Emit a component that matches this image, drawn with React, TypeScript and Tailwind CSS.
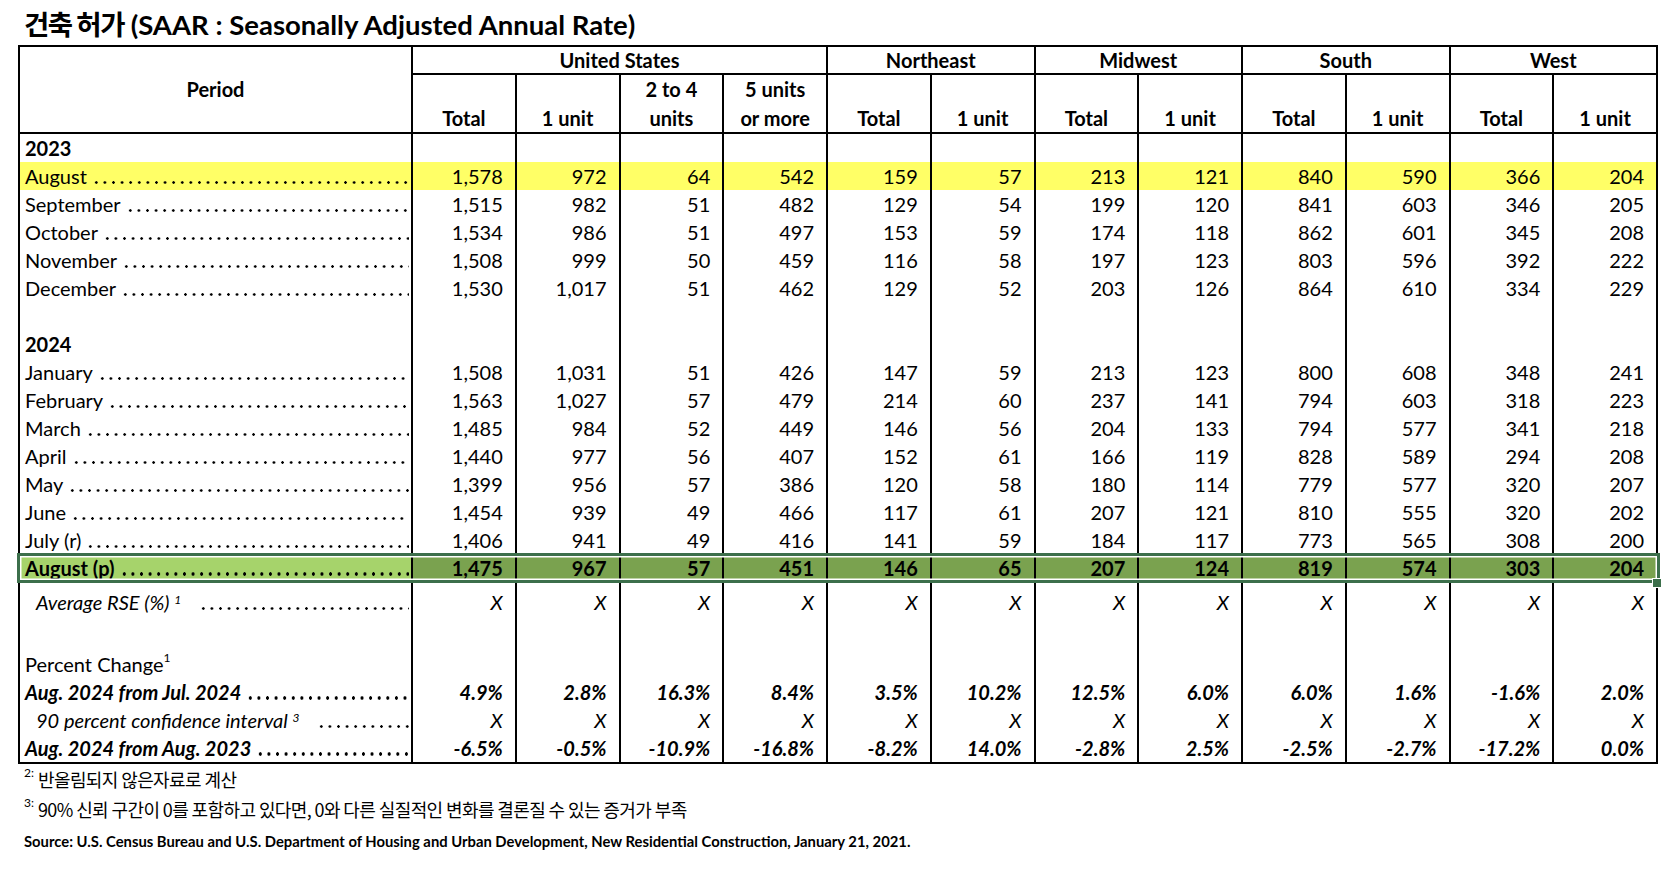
import React from "react";

type Row = {
  label: string;
  values?: string[];
  kind?: "year" | "blank" | "yellow" | "green";
};

const ROWS: Row[] = [
  { label: "2023", kind: "year" },
  { label: "August", kind: "yellow", values: ["1,578", "972", "64", "542", "159", "57", "213", "121", "840", "590", "366", "204"] },
  { label: "September", values: ["1,515", "982", "51", "482", "129", "54", "199", "120", "841", "603", "346", "205"] },
  { label: "October", values: ["1,534", "986", "51", "497", "153", "59", "174", "118", "862", "601", "345", "208"] },
  { label: "November", values: ["1,508", "999", "50", "459", "116", "58", "197", "123", "803", "596", "392", "222"] },
  { label: "December", values: ["1,530", "1,017", "51", "462", "129", "52", "203", "126", "864", "610", "334", "229"] },
  { label: "", kind: "blank" },
  { label: "2024", kind: "year" },
  { label: "January", values: ["1,508", "1,031", "51", "426", "147", "59", "213", "123", "800", "608", "348", "241"] },
  { label: "February", values: ["1,563", "1,027", "57", "479", "214", "60", "237", "141", "794", "603", "318", "223"] },
  { label: "March", values: ["1,485", "984", "52", "449", "146", "56", "204", "133", "794", "577", "341", "218"] },
  { label: "April", values: ["1,440", "977", "56", "407", "152", "61", "166", "119", "828", "589", "294", "208"] },
  { label: "May", values: ["1,399", "956", "57", "386", "120", "58", "180", "114", "779", "577", "320", "207"] },
  { label: "June", values: ["1,454", "939", "49", "466", "117", "61", "207", "121", "810", "555", "320", "202"] },
  { label: "July (r)", values: ["1,406", "941", "49", "416", "141", "59", "184", "117", "773", "565", "308", "200"] },
  { label: "August (p)", kind: "green", values: ["1,475", "967", "57", "451", "146", "65", "207", "124", "819", "574", "303", "204"] },
];

const X12 = Array(12).fill("X");

const GRID = "grid grid-cols-[391px_repeat(12,minmax(0,1fr))]";

// dot leaders drawn as a repeating background, sitting on the text baseline
const Leader = ({
  children,
  indent = false,
  gap = false,
  bold = false,
}: {
  children: React.ReactNode;
  indent?: boolean;
  gap?: boolean;
  bold?: boolean;
}) => (
  <div className={`flex w-full items-baseline whitespace-nowrap ${indent ? "pl-[16px]" : "pl-[5px]"} pr-[2px]`}>
    <span className="shrink-0">{children}</span>
    <span
      className={`min-w-0 flex-1 bg-left bg-repeat-x ${gap ? "ml-[18px]" : "ml-[5px]"} ${
        bold
          ? "h-[4px] bg-[radial-gradient(circle,#000_1.5px,transparent_1.9px)] bg-[length:8.6px_4px]"
          : "h-[3px] bg-[radial-gradient(circle,#000_1.1px,transparent_1.5px)] bg-[length:8.6px_3px]"
      }`}
    />
  </div>
);

const Cells = ({ values, className = "" }: { values: string[]; className?: string }) => (
  <>
    {values.map((v, i) => (
      <div key={i} className={`flex items-center justify-end border-l-2 border-black pr-[12px] ${className}`}>
        {v}
      </div>
    ))}
  </>
);

const EmptyCells = () => (
  <>
    {Array.from({ length: 12 }).map((_, i) => (
      <div key={i} className="border-l-2 border-black" />
    ))}
  </>
);

export default function App() {
  return (
    <div className="min-h-[870px] bg-white pl-[18px] pt-[5px] font-[Lato,'Noto_Sans_CJK_KR',sans-serif] text-black">
      <h1 className="ml-[6px] h-[40px] text-[27.5px] font-bold leading-[36px]">
        <span className="font-['Noto_Sans_CJK_KR',sans-serif] font-bold tracking-[-1.5px]">건축 허가</span> (SAAR : Seasonally Adjusted Annual Rate)
      </h1>

      <div className="w-[1640px] border-2 border-black text-[20px] leading-none">
        {/* header */}
        <div className={`${GRID} grid-rows-[28px_57px] border-b-2 border-black font-bold`}>
          <div className="row-span-2 flex items-center justify-center pb-[2px]">Period</div>
          <div className="col-span-4 flex items-center justify-center border-b-2 border-l-2 border-black">United States</div>
          <div className="col-span-2 flex items-center justify-center border-b-2 border-l-2 border-black">Northeast</div>
          <div className="col-span-2 flex items-center justify-center border-b-2 border-l-2 border-black">Midwest</div>
          <div className="col-span-2 flex items-center justify-center border-b-2 border-l-2 border-black">South</div>
          <div className="col-span-2 flex items-center justify-center border-b-2 border-l-2 border-black">West</div>
          {["Total", "1 unit", "2 to 4|units", "5 units|or more", "Total", "1 unit", "Total", "1 unit", "Total", "1 unit", "Total", "1 unit"].map((h, i) => (
            <div key={i} className="flex flex-col items-center justify-end gap-[9px] border-l-2 border-black pb-[4px]">
              {h.split("|").map((line) => (
                <span key={line}>{line}</span>
              ))}
            </div>
          ))}
        </div>

        {/* body */}
        {ROWS.map((r, idx) => {
          if (r.kind === "blank") {
            return (
              <div key={idx} className={`${GRID} h-[28px]`}>
                <div />
                <EmptyCells />
              </div>
            );
          }
          if (r.kind === "year") {
            return (
              <div key={idx} className={`${GRID} h-[28px]`}>
                <div className="flex items-center pl-[5px] font-bold">{r.label}</div>
                <EmptyCells />
              </div>
            );
          }
          if (r.kind === "green") {
            return (
              <div key={idx} className={`${GRID} relative h-[28px] font-bold`}>
                <div className="flex items-center bg-[#a6d36b]">
                  <Leader bold>{r.label}</Leader>
                </div>
                <Cells values={r.values!} className="bg-[#7aa24f]" />
                <div className="pointer-events-none absolute -top-[1px] -bottom-[1px] -left-[3px] -right-[4px] border-[3px] border-[#3c6f4b] shadow-[inset_0_0_0_1.5px_#ffffff]" />
                <div className="absolute -bottom-[6px] -right-[6px] h-[10px] w-[10px] border border-white bg-[#3c6f4b]" />
              </div>
            );
          }
          return (
            <div key={idx} className={`${GRID} h-[28px] ${r.kind === "yellow" ? "bg-[#ffff66]" : ""}`}>
              <div className="flex items-center">
                <Leader>{r.label}</Leader>
              </div>
              <Cells values={r.values!} />
            </div>
          );
        })}

        {/* Average RSE */}
        <div className={`${GRID} h-[40px] italic`}>
          <div className="flex items-center">
            <Leader indent gap>
              Average RSE (%) <sup className="text-[12px]">1</sup>
            </Leader>
          </div>
          <Cells values={X12} />
        </div>
        <div className={`${GRID} h-[28px]`}>
          <div />
          <EmptyCells />
        </div>
        <div className={`${GRID} h-[28px]`}>
          <div className="flex items-center pl-[5px]">
            Percent Change<sup className="text-[12px]">1</sup>
          </div>
          <EmptyCells />
        </div>
        <div className={`${GRID} h-[28px] font-bold italic`}>
          <div className="flex items-center">
            <Leader bold>Aug. 2024 from Jul. 2024</Leader>
          </div>
          <Cells values={["4.9%", "2.8%", "16.3%", "8.4%", "3.5%", "10.2%", "12.5%", "6.0%", "6.0%", "1.6%", "-1.6%", "2.0%"]} />
        </div>
        <div className={`${GRID} h-[28px] italic`}>
          <div className="flex items-center">
            <Leader indent gap>
              90 percent confidence interval <sup className="text-[12px]">3</sup>
            </Leader>
          </div>
          <Cells values={X12} />
        </div>
        <div className={`${GRID} h-[28px] font-bold italic`}>
          <div className="flex items-center">
            <Leader bold>Aug. 2024 from Aug. 2023</Leader>
          </div>
          <Cells values={["-6.5%", "-0.5%", "-10.9%", "-16.8%", "-8.2%", "14.0%", "-2.8%", "2.5%", "-2.5%", "-2.7%", "-17.2%", "0.0%"]} />
        </div>
      </div>

      {/* footnotes */}
      <div className="ml-[6px] flex flex-col leading-none">
        <p className="flex h-[30px] items-center">
          <sup className="mr-[4px] text-[12px]">2:</sup>
          <span className="font-['Noto_Sans_CJK_KR',sans-serif] text-[18px] tracking-[-0.6px]">반올림되지 않은자료로 계산</span>
        </p>
        <p className="flex h-[30px] items-center">
          <sup className="mr-[4px] text-[12px]">3:</sup>
          <span className="font-['Noto_Sans_CJK_KR',sans-serif] text-[18px] tracking-[-0.6px]">90% 신뢰 구간이 0를 포함하고 있다면, 0와 다른 실질적인 변화를 결론질 수 있는 증거가 부족</span>
        </p>
        <p className="mt-[2px] flex h-[30px] items-center text-[14.8px] font-bold">
          Source: U.S. Census Bureau and U.S. Department of Housing and Urban Development, New Residential Construction, January 21, 2021.
        </p>
      </div>
    </div>
  );
}
